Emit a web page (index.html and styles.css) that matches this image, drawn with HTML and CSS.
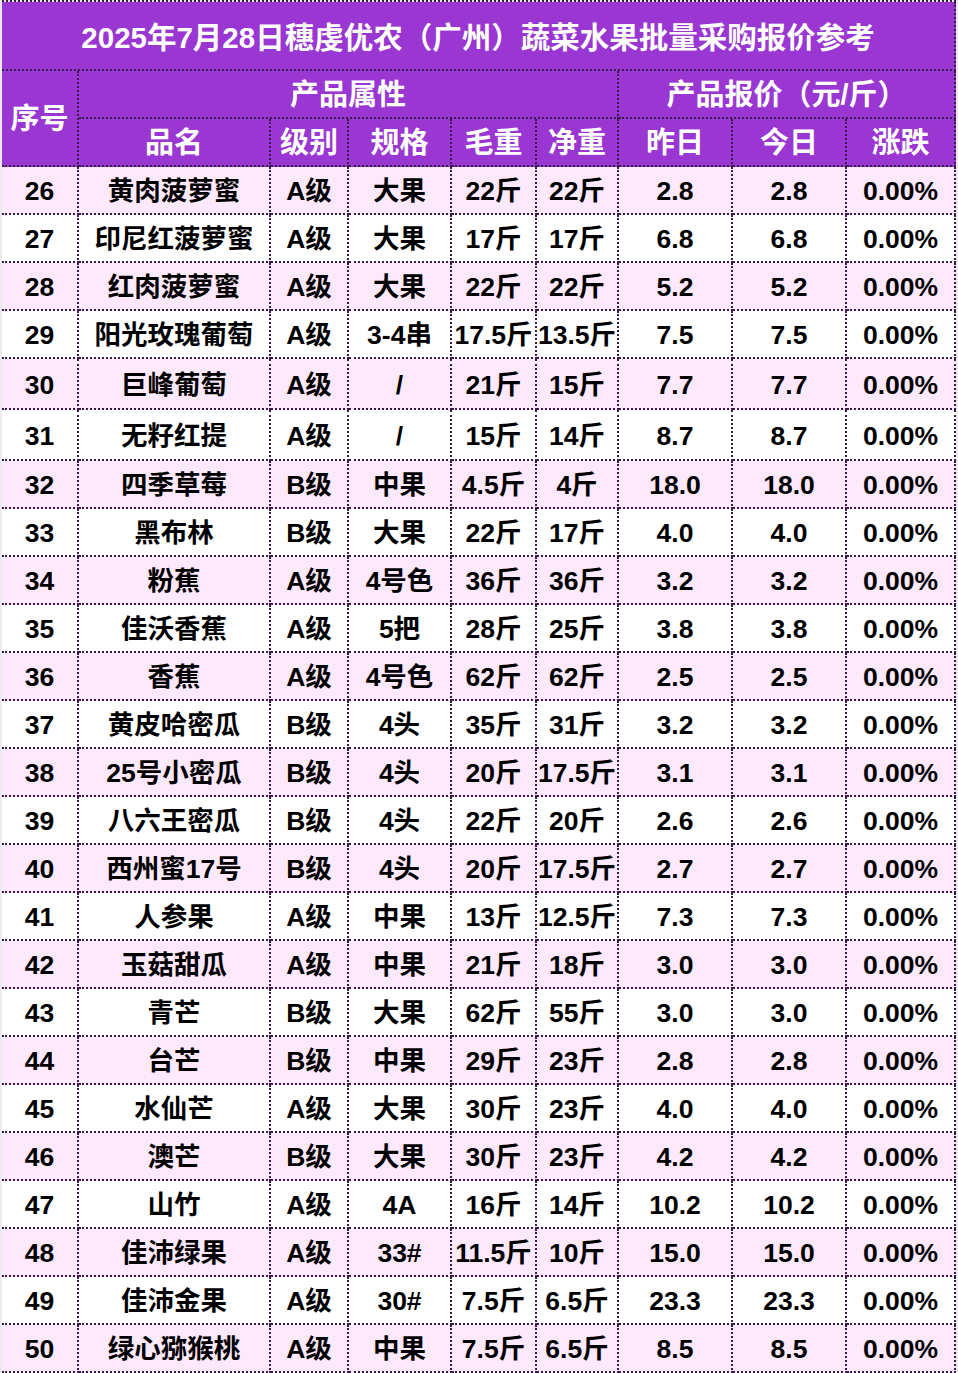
FILE: index.html
```html
<!DOCTYPE html>
<html lang="zh-CN">
<head>
<meta charset="utf-8">
<title>报价参考</title>
<link rel="stylesheet" href="styles.css">
</head>
<body>
<div class="sheet">
  <div class="head">
    <div class="c title">2025年7月28日穗虔优农（广州）蔬菜水果批量采购报价参考</div>
    <div class="c seq">序号</div>
    <div class="c attr">产品属性</div>
    <div class="c price">产品报价（元/斤）</div>
    <div class="c">品名</div>
    <div class="c">级别</div>
    <div class="c">规格</div>
    <div class="c">毛重</div>
    <div class="c">净重</div>
    <div class="c">昨日</div>
    <div class="c">今日</div>
    <div class="c">涨跌</div>
  </div>
  <div class="row pink"><div class="c">26</div><div class="c">黄肉菠萝蜜</div><div class="c">A级</div><div class="c">大果</div><div class="c">22斤</div><div class="c">22斤</div><div class="c">2.8</div><div class="c">2.8</div><div class="c">0.00%</div></div>
  <div class="row"><div class="c">27</div><div class="c">印尼红菠萝蜜</div><div class="c">A级</div><div class="c">大果</div><div class="c">17斤</div><div class="c">17斤</div><div class="c">6.8</div><div class="c">6.8</div><div class="c">0.00%</div></div>
  <div class="row pink"><div class="c">28</div><div class="c">红肉菠萝蜜</div><div class="c">A级</div><div class="c">大果</div><div class="c">22斤</div><div class="c">22斤</div><div class="c">5.2</div><div class="c">5.2</div><div class="c">0.00%</div></div>
  <div class="row"><div class="c">29</div><div class="c">阳光玫瑰葡萄</div><div class="c">A级</div><div class="c">3-4串</div><div class="c">17.5斤</div><div class="c">13.5斤</div><div class="c">7.5</div><div class="c">7.5</div><div class="c">0.00%</div></div>
  <div class="row pink tall"><div class="c">30</div><div class="c">巨峰葡萄</div><div class="c">A级</div><div class="c">/</div><div class="c">21斤</div><div class="c">15斤</div><div class="c">7.7</div><div class="c">7.7</div><div class="c">0.00%</div></div>
  <div class="row tall"><div class="c">31</div><div class="c">无籽红提</div><div class="c">A级</div><div class="c">/</div><div class="c">15斤</div><div class="c">14斤</div><div class="c">8.7</div><div class="c">8.7</div><div class="c">0.00%</div></div>
  <div class="row pink"><div class="c">32</div><div class="c">四季草莓</div><div class="c">B级</div><div class="c">中果</div><div class="c">4.5斤</div><div class="c">4斤</div><div class="c">18.0</div><div class="c">18.0</div><div class="c">0.00%</div></div>
  <div class="row"><div class="c">33</div><div class="c">黑布林</div><div class="c">B级</div><div class="c">大果</div><div class="c">22斤</div><div class="c">17斤</div><div class="c">4.0</div><div class="c">4.0</div><div class="c">0.00%</div></div>
  <div class="row pink"><div class="c">34</div><div class="c">粉蕉</div><div class="c">A级</div><div class="c">4号色</div><div class="c">36斤</div><div class="c">36斤</div><div class="c">3.2</div><div class="c">3.2</div><div class="c">0.00%</div></div>
  <div class="row"><div class="c">35</div><div class="c">佳沃香蕉</div><div class="c">A级</div><div class="c">5把</div><div class="c">28斤</div><div class="c">25斤</div><div class="c">3.8</div><div class="c">3.8</div><div class="c">0.00%</div></div>
  <div class="row pink"><div class="c">36</div><div class="c">香蕉</div><div class="c">A级</div><div class="c">4号色</div><div class="c">62斤</div><div class="c">62斤</div><div class="c">2.5</div><div class="c">2.5</div><div class="c">0.00%</div></div>
  <div class="row"><div class="c">37</div><div class="c">黄皮哈密瓜</div><div class="c">B级</div><div class="c">4头</div><div class="c">35斤</div><div class="c">31斤</div><div class="c">3.2</div><div class="c">3.2</div><div class="c">0.00%</div></div>
  <div class="row pink"><div class="c">38</div><div class="c">25号小密瓜</div><div class="c">B级</div><div class="c">4头</div><div class="c">20斤</div><div class="c">17.5斤</div><div class="c">3.1</div><div class="c">3.1</div><div class="c">0.00%</div></div>
  <div class="row"><div class="c">39</div><div class="c">八六王密瓜</div><div class="c">B级</div><div class="c">4头</div><div class="c">22斤</div><div class="c">20斤</div><div class="c">2.6</div><div class="c">2.6</div><div class="c">0.00%</div></div>
  <div class="row pink"><div class="c">40</div><div class="c">西州蜜17号</div><div class="c">B级</div><div class="c">4头</div><div class="c">20斤</div><div class="c">17.5斤</div><div class="c">2.7</div><div class="c">2.7</div><div class="c">0.00%</div></div>
  <div class="row"><div class="c">41</div><div class="c">人参果</div><div class="c">A级</div><div class="c">中果</div><div class="c">13斤</div><div class="c">12.5斤</div><div class="c">7.3</div><div class="c">7.3</div><div class="c">0.00%</div></div>
  <div class="row pink"><div class="c">42</div><div class="c">玉菇甜瓜</div><div class="c">A级</div><div class="c">中果</div><div class="c">21斤</div><div class="c">18斤</div><div class="c">3.0</div><div class="c">3.0</div><div class="c">0.00%</div></div>
  <div class="row"><div class="c">43</div><div class="c">青芒</div><div class="c">B级</div><div class="c">大果</div><div class="c">62斤</div><div class="c">55斤</div><div class="c">3.0</div><div class="c">3.0</div><div class="c">0.00%</div></div>
  <div class="row pink"><div class="c">44</div><div class="c">台芒</div><div class="c">B级</div><div class="c">中果</div><div class="c">29斤</div><div class="c">23斤</div><div class="c">2.8</div><div class="c">2.8</div><div class="c">0.00%</div></div>
  <div class="row"><div class="c">45</div><div class="c">水仙芒</div><div class="c">A级</div><div class="c">大果</div><div class="c">30斤</div><div class="c">23斤</div><div class="c">4.0</div><div class="c">4.0</div><div class="c">0.00%</div></div>
  <div class="row pink"><div class="c">46</div><div class="c">澳芒</div><div class="c">B级</div><div class="c">大果</div><div class="c">30斤</div><div class="c">23斤</div><div class="c">4.2</div><div class="c">4.2</div><div class="c">0.00%</div></div>
  <div class="row"><div class="c">47</div><div class="c">山竹</div><div class="c">A级</div><div class="c">4A</div><div class="c">16斤</div><div class="c">14斤</div><div class="c">10.2</div><div class="c">10.2</div><div class="c">0.00%</div></div>
  <div class="row pink"><div class="c">48</div><div class="c">佳沛绿果</div><div class="c">A级</div><div class="c">33#</div><div class="c">11.5斤</div><div class="c">10斤</div><div class="c">15.0</div><div class="c">15.0</div><div class="c">0.00%</div></div>
  <div class="row"><div class="c">49</div><div class="c">佳沛金果</div><div class="c">A级</div><div class="c">30#</div><div class="c">7.5斤</div><div class="c">6.5斤</div><div class="c">23.3</div><div class="c">23.3</div><div class="c">0.00%</div></div>
  <div class="row pink"><div class="c">50</div><div class="c">绿心猕猴桃</div><div class="c">A级</div><div class="c">中果</div><div class="c">7.5斤</div><div class="c">6.5斤</div><div class="c">8.5</div><div class="c">8.5</div><div class="c">0.00%</div></div>
</div>
</body>
</html>
```
FILE: styles.css
```css
html, body {
  margin: 0;
  padding: 0;
  background: #e9e9ee;
}
body {
  font-family: "Liberation Sans", "Noto Sans CJK SC", sans-serif;
  font-weight: bold;
}
.sheet {
  margin-left: 2px;
  width: 954px;
  border-top: 2px dotted #3a1a4e;
  --cols: 77px 192px 78px 103px 85px 82px 114px 114px 109px;
}
.head {
  display: grid;
  grid-template-columns: var(--cols);
  grid-template-rows: 69px 48px 48px;
  background: #9a37d2;
  color: #ffffff;
  font-size: 29px;
}
.c {
  box-sizing: border-box;
  border-right: 2px dotted #3a1a4e;
  border-bottom: 2px dotted #3a1a4e;
  display: flex;
  align-items: center;
  justify-content: center;
  white-space: nowrap;
  overflow: hidden;
  line-height: 1;
  padding-top: 3px;
}
.head .title {
  grid-column: 1 / -1;
  font-size: 29.5px;
  padding-top: 4px;
}
.head .seq {
  grid-row: 2 / 4;
}
.head .attr {
  grid-column: 2 / 7;
}
.head .price {
  grid-column: 7 / 10;
}
.row {
  display: grid;
  grid-template-columns: var(--cols);
  height: 48px;
  background: #ffffff;
  color: #000000;
  font-size: 26.5px;
}
.row.tall {
  height: 51px;
}
.row.pink {
  background: #fde8fc;
}
```
